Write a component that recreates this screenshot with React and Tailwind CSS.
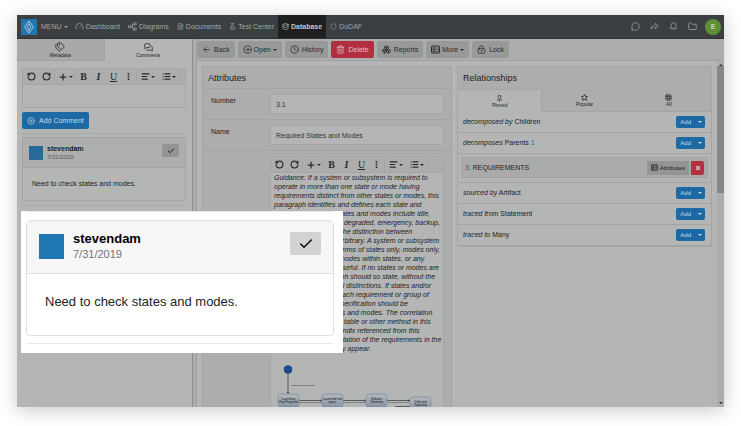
import React from "react";
import {
  ArrowLeft,
  CircleArrowRight,
  Clock,
  Trash2,
  Boxes,
  LockKeyhole,
  Gauge,
  Network,
  FileText,
  FlaskConical,
  Database,
  Shield,
  MessageCircle,
  Bell,
  Folder,
  Tags,
  MessagesSquare,
  RotateCcw,
  RotateCw,
  Plus,
  EllipsisVertical,
  TextAlignStart,
  List,
  CirclePlus,
  Check,
  Pin,
  Star,
  Grid3x3,
  X,
} from "lucide-react";
import { PiShareFat } from "react-icons/pi";

const navLinks = [
  { label: "Dashboard", icon: Gauge, size: "size-[9px]" },
  { label: "Diagrams", icon: Network, size: "size-[9px] -rotate-90" },
  { label: "Documents", icon: FileText, size: "size-[7px]" },
  { label: "Test Center", icon: FlaskConical, size: "size-[7px]" },
  { label: "Database", icon: Database, size: "size-[7px]", active: true },
  { label: "DoDAF", icon: Shield, size: "size-[7px]" },
];

const TableIcon = ({ className }) => (
  <svg viewBox="0 0 9 8" className={className} fill="none" stroke="currentColor">
    <rect x="0.500" y="0.500" width="8" height="7" rx="0.800" />
    <path d="M0.500 2.500h8M0.500 4.200h8M0.500 5.900h8M3 1v6.500" strokeWidth="0.600" />
  </svg>
);

const actions = [
  { label: "Back", icon: ArrowLeft },
  { label: "Open", icon: CircleArrowRight, caret: true },
  { label: "History", icon: Clock },
  { label: "Delete", icon: Trash2, danger: true },
  { label: "Reports", icon: Boxes },
  { label: "More", icon: TableIcon, caret: true },
  { label: "Lock", icon: LockKeyhole },
];

const guidance = [
  "Guidance: If a system or subsystem is required to",
  "operate in more than one state or mode having",
  "requirements distinct from other states or modes, this",
  "paragraph identifies and defines each state and",
  "mode. Examples of states and modes include idle,",
  "ready, active, training, degraded, emergency, backup,",
  "wartime, peacetime. The distinction between",
  "states and modes is arbitrary. A system or subsystem",
  "may be described in terms of states only, modes only,",
  "states within modes, modes within states, or any",
  "other scheme that is useful. If no states or modes are",
  "required, this paragraph should so state, without the",
  "need to create artificial distinctions. If states and/or",
  "modes are required, each requirement or group of",
  "requirements in this specification should be",
  "correlated to the states and modes. The correlation",
  "may be indicated by a table or other method in this",
  "paragraph, in an appendix referenced from this",
  "paragraph, or by annotation of the requirements in the",
  "paragraphs where they appear.",
];

const Caret = () => (
  <svg viewBox="0 0 4 2" className="w-1 h-[2px] shrink-0" fill="currentColor">
    <path d="M0 0h4L2 2z" />
  </svg>
);

const Navbar = () => {
  return (
    <header className="flex items-center h-6 shrink-0 bg-[#3b3f41] border-b border-[#2e3233] text-[#a3a5a5] pl-1 pr-[3px]">
      <a href="#home" aria-label="Home" className="size-4 bg-[#2375ab] text-[#b9cfdc]">
        <svg viewBox="0 0 16 16" className="size-4" fill="none" stroke="currentColor">
          <path d="M8 2 12.500 8 8 14 3.500 8z" strokeWidth="0.900" />
          <path d="M8 5 10 8 8 11 6 8z" strokeWidth="0.900" />
          <path d="M8 2v3M8 11v3" strokeWidth="0.500" />
        </svg>
      </a>
      <button className="flex items-center gap-[2px] ml-1 mr-[3px]">
        MENU <Caret />
      </button>
      <nav className="flex self-stretch">
        {navLinks.map((link) => (
          <a
            key={link.label}
            href="#nav"
            className={`flex items-center gap-[2px] px-1 whitespace-nowrap ${
              link.active ? "bg-[#1d201f] text-[#c4c5c5] font-bold" : ""
            }`}
          >
            <link.icon className={link.size} />
            {link.label}
          </a>
        ))}
      </nav>
      <div className="flex items-center gap-[10px] ml-auto mr-2">
        <button aria-label="Chat"><MessageCircle className="size-[9px]" /></button>
        <button aria-label="Share"><PiShareFat className="size-[9px]" /></button>
        <button aria-label="Notifications"><Bell className="size-[9px]" /></button>
        <button aria-label="Files"><Folder className="size-[9px]" /></button>
      </div>
      <button className="size-4 rounded-full bg-[#5f9038] text-[#c9d6be] font-bold">E</button>
    </header>
  );
};

const EditorToolbar = () => {
  return (
    <div className="flex h-4 px-px bg-[#adadad] border-b border-[#a4a6a5] text-[#2b2b2b]">
      <button aria-label="Undo" className="w-[15px] grid place-items-center"><RotateCcw className="size-[9px]" strokeWidth={3} /></button>
      <button aria-label="Redo" className="w-[15px] grid place-items-center"><RotateCw className="size-[9px]" strokeWidth={3} /></button>
      <button aria-label="Insert" className="w-[22px] flex items-center justify-center gap-px border-x border-[#a6a6a6]">
        <Plus className="size-[10px]" strokeWidth={3} /><Caret />
      </button>
      <button aria-label="Bold" className="w-[15px] font-['Liberation_Serif',serif] text-[10px] font-bold">B</button>
      <button aria-label="Italic" className="w-[15px] font-['Liberation_Serif',serif] text-[10px] font-bold italic">I</button>
      <button aria-label="Underline" className="w-[15px] font-['Liberation_Serif',serif] text-[10px] underline">U</button>
      <button aria-label="More styles" className="w-[15px] grid place-items-center"><EllipsisVertical className="size-[9px]" strokeWidth={3} /></button>
      <button aria-label="Align" className="w-[22px] flex items-center justify-center gap-px border-l border-[#a6a6a6]">
        <TextAlignStart className="size-[9px]" strokeWidth={3} /><Caret />
      </button>
      <button aria-label="List" className="w-[22px] flex items-center justify-center gap-px border-r border-[#a6a6a6]">
        <List className="size-[9px]" strokeWidth={3} /><Caret />
      </button>
    </div>
  );
};

const CommentsPanel = () => {
  return (
    <aside className="w-44 shrink-0 bg-[#b3b6b5] border-r border-[#8b8d8c]">
      <div className="grid grid-cols-2 h-[22px] text-[5px] leading-[6px] text-[#222]">
        <button className="flex flex-col items-center justify-center bg-[#a9a9a9] border-b border-r border-[#a2a2a2]">
          <Tags className="size-[10px]" />
          Metadata
        </button>
        <button className="flex flex-col items-center justify-center">
          <MessagesSquare className="size-[9px]" />
          Comments
        </button>
      </div>
      <div className="pl-[5px] pr-[6px] pt-[7px]">
        <div className="border border-[#a6a8a7]">
          <EditorToolbar />
          <textarea aria-label="New comment" className="block w-full h-[22px] resize-none bg-transparent" />
        </div>
        <button className="flex items-center gap-1 h-[17px] px-[5px] mt-1 rounded-xs bg-[#1c69a3] text-[#cbdbe6]">
          <CirclePlus className="size-2" />
          Add Comment
        </button>
        <hr className="mt-1 border-[#a6a8a7]" />
        <article className="mt-[3px] border border-[#a4a6a5] rounded-xs">
          <div className="flex items-center h-[30px] px-[6px] bg-[#adafae] border-b border-[#a4a6a5]">
            <div className="size-[14px] bg-[#266a96]" />
            <div className="ml-1 leading-2">
              <p className="font-bold text-[#1b1b1b]">stevendam</p>
              <p className="text-[6px] text-[#555]">7/31/2019</p>
            </div>
            <button aria-label="Resolve" className="grid place-items-center w-[17px] h-[13px] mb-1 ml-auto rounded-xs bg-[#949494] text-[#1b1b1b]">
              <Check className="size-2" strokeWidth={3} />
            </button>
          </div>
          <p className="px-[9px] py-[11px] leading-[10px] text-[#222]">Need to check states and modes.</p>
        </article>
        <hr className="mt-1 border-[#a6a8a7]" />
      </div>
    </aside>
  );
};

const ActionBar = () => {
  return (
    <div className="flex items-center gap-[3px] h-[22px] shrink-0 bg-[#adadad] border-b border-[#a0a2a1]">
      {actions.map((action) => (
        <button
          key={action.label}
          className={`flex items-center h-[17px] px-[5px] rounded-xs ${
            action.caret ? "gap-[2px]" : "gap-[3px]"
          } ${action.danger ? "bg-[#b12f41] text-[#e0c3c7]" : "bg-[#989999] text-[#2a2a2a]"}`}
        >
          <action.icon className="size-[9px]" />
          {action.label}
          {action.caret && <Caret />}
        </button>
      ))}
    </div>
  );
};

const StatesDiagram = () => {
  const boxes = [
    { x: 7, y: 31, lines: ["Launching", "Pad Prepared"] },
    { x: 51, y: 31, lines: ["Launched into", "space"] },
    { x: 95, y: 31, lines: ["Deboost", "Telemetry"] },
    { x: 139, y: 34, lines: ["Orbit and", "Trajectory"] },
  ];
  return (
    <svg viewBox="0 0 172 50" className="block w-[172px] h-[50px] mt-[10px]" fontSize="3" textAnchor="middle">
      <defs>
        <linearGradient id="box" x2="0" y2="1">
          <stop offset="0" stopColor="#b4b8bb" />
          <stop offset="1" stopColor="#8795a6" />
        </linearGradient>
      </defs>
      <path d="M17 10v20M28 37.500h21M72 37.500h21M116 37.500h21M124 43.500h15" stroke="#444" strokeWidth="0.800" />
      <path d="M16 29h2l-1 2zM49 36.500v2l2-1zM93 36.500v2l2-1zM137 36.500v2l2-1z" fill="#222" />
      <circle cx="17" cy="6.500" r="4" fill="#1c4d8b" stroke="#143763" strokeWidth="0.500" />
      <g fill="#222" fontSize="2.500">
        <text x="32" y="23">Sitting on launch pad</text>
        <text x="39.500" y="40">Launching Sequence</text>
        <text x="83.500" y="40">Getting up to altitude</text>
        <text x="127.500" y="40">Synchronous orbit</text>
      </g>
      {boxes.map((box) => (
        <g key={box.x}>
          <rect x={box.x} y={box.y} width="21" height="13" rx="3" fill="url(#box)" stroke="#7488a0" strokeWidth="0.700" />
          <text x={box.x + 10.5} y={box.y + 6} fill="#111">{box.lines[0]}</text>
          <text x={box.x + 10.5} y={box.y + 9} fill="#111">{box.lines[1]}</text>
        </g>
      ))}
    </svg>
  );
};

const Field = ({ id, label, value }) => {
  return (
    <div className="flex h-[31px] pl-2 pr-[7px] pt-[5px] border-b border-[#a4a5a5]">
      <label htmlFor={id} className="w-[59px] pt-[2px]">{label}</label>
      <input
        id={id}
        defaultValue={value}
        className="grow min-w-0 h-5 px-[5px] rounded-xs border border-[#a4a6a5] bg-[#b3b6b5] text-[#333]"
      />
    </div>
  );
};

const Attributes = () => {
  return (
    <section className="w-[250px] shrink-0 bg-[#adadad] border border-b-0 border-[#a4a5a5] overflow-hidden">
      <h2 className="h-[22px] px-[5px] text-[9px] leading-[22px] text-[#222] border-b border-[#a4a5a5]">Attributes</h2>
      <Field id="number" label="Number" value="3.1" />
      <Field id="name" label="Name" value="Required States and Modes" />
      <div className="ml-[67px] mr-[7px] mt-[5px] bg-[#b3b6b5] border border-[#a6a8a7]">
        <EditorToolbar />
        <p className="px-[3px] italic leading-[9px] text-[#222] whitespace-nowrap">
          {guidance.map((line) => (
            <span key={line} className="block">{line}</span>
          ))}
        </p>
        <StatesDiagram />
      </div>
    </section>
  );
};

const Relation = ({ verb, target, count }) => {
  return (
    <div className="flex items-center h-[21px] pl-[5px] pr-[6px] border-b border-[#a4a6a5]">
      <p>
        <i>{verb}</i> {target} {count && <span className="text-[#1c69a3]">{count}</span>}
      </p>
      <div className="flex ml-auto h-3 rounded-xs overflow-hidden bg-[#1c69a3] text-[#cbdbe6] text-[6px]">
        <button className="pl-1 pr-[3px]">Add</button>
        <button aria-label={`More ${verb} ${target}`} className="grid place-items-center w-[11px]"><Caret /></button>
      </div>
    </div>
  );
};

const Relationships = () => {
  return (
    <section className="grow min-w-0 self-start border border-[#a4a5a5]">
      <h2 className="h-[22px] px-[5px] text-[9px] leading-[22px] text-[#222] bg-[#adadad]">Relationships</h2>
      <div className="grid grid-cols-3 h-[23px] text-[5px] leading-[6px] text-[#222]">
        <button className="flex flex-col items-center justify-center border-t border-r border-[#a4a6a5]">
          <Pin className="size-[7px]" />
          Pinned
        </button>
        <button className="flex flex-col items-center justify-center bg-[#adadad] border-b border-[#a4a6a5]">
          <Star className="size-[7px]" strokeWidth={3} />
          Popular
        </button>
        <button className="flex flex-col items-center justify-center bg-[#adadad] border-b border-[#a4a6a5]">
          <Grid3x3 className="size-[7px]" />
          All
        </button>
      </div>
      <Relation verb="decomposed by" target="Children" />
      <Relation verb="decomposes" target="Parents" count="1" />
      <div className="px-[3px] pt-[3px] pb-1 border-b border-[#a4a6a5]">
        <div className="flex items-center h-[21px] px-[3px] bg-[#a9aaaa] border border-[#a4a5a5]">
          <p><span className="text-[#555]">3.</span> REQUIREMENTS</p>
          <button className="flex items-center gap-[2px] h-[14px] px-1 ml-auto rounded-l-xs bg-[#949494] text-[6px]">
            <TableIcon className="size-[7px]" />
            Attributes
          </button>
          <button aria-label="Remove" className="grid place-items-center w-[13px] h-[14px] ml-[2px] rounded-r-xs bg-[#b12f41] text-[#e0c3c7]">
            <X className="size-[6px]" strokeWidth={5} />
          </button>
        </div>
      </div>
      <Relation verb="sourced by" target="Artifact" />
      <Relation verb="traced from" target="Statement" />
      <Relation verb="traced to" target="Many" />
    </section>
  );
};

// enlarged copy of the comment, floats over the page
const CommentCallout = () => {
  return (
    <div className="absolute left-1 top-[196px] w-[322px] h-[142px] pl-[5px] pr-[9px] bg-white text-[13px] text-[#212529]">
      <hr className="border-[#e8e8e8]" />
      <article className="mt-2 border border-[#dfdfdf] rounded-sm">
        <div className="flex h-[53px] px-3 bg-[#f7f7f7] border-b border-[#dfdfdf]">
          <div className="size-[25px] mt-[13px] bg-[#1f77b4]" />
          <div className="ml-[9px] mt-[10px] leading-4">
            <p className="font-bold text-black">stevendam</p>
            <p className="text-[11px] leading-[14px] text-[#6c757d]">7/31/2019</p>
          </div>
          <button aria-label="Resolve comment" className="grid place-items-center w-[31px] h-[23px] mt-[11px] ml-auto rounded-xs bg-[#d2d2d2] text-black">
            <Check className="size-4" />
          </button>
        </div>
        <p className="px-[18px] pt-5 pb-[25px] leading-4">Need to check states and modes.</p>
      </article>
      <hr className="mt-[7px] border-[#e8e8e8]" />
    </div>
  );
};

const App = () => {
  return (
    <div className="h-screen px-[17px] pt-[15px] pb-[19px] bg-white font-['Liberation_Sans',sans-serif] text-[7px] leading-[10px] text-[#222]">
      <div className="relative h-full flex flex-col bg-[#b3b6b5] shadow-[0_3px_18px_rgba(0,0,0,0.22)]">
        <Navbar />
        <div className="flex grow min-h-0">
          <CommentsPanel />
          <div className="w-1 shrink-0 bg-[#adadad] border-r border-[#a0a2a1]" />
          <main className="flex flex-col grow min-w-0">
            <ActionBar />
            <div className="flex grow min-h-0">
              <div className="flex grow min-w-0 gap-[5px] px-[5px] pt-[5px] overflow-hidden">
                <Attributes />
                <Relationships />
              </div>
              <div className="flex flex-col items-center w-[7px] shrink-0 py-[3px] bg-[#adadad] text-[#333]">
                <div className="rotate-180"><Caret /></div>
                <div className="w-full h-[127px] bg-[#858686]" />
                <div className="mt-auto"><Caret /></div>
              </div>
            </div>
          </main>
        </div>
        <CommentCallout />
      </div>
    </div>
  );
};

export default App;
